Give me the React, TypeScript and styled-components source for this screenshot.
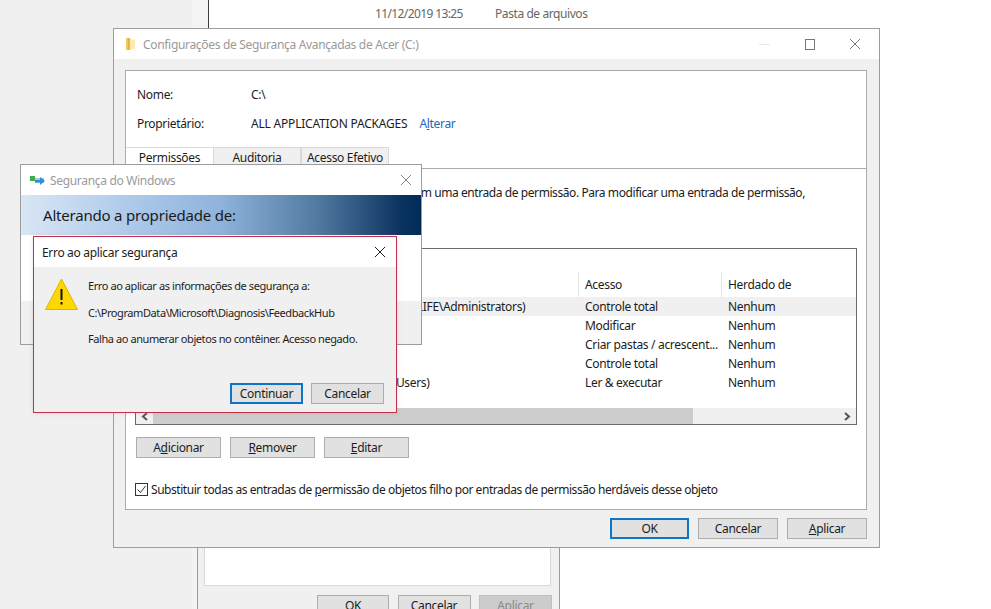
import { FC, ReactNode } from 'react';
import styled, { createGlobalStyle } from 'styled-components';

const GlobalStyle = createGlobalStyle`
  html, body {
    margin: 0;
    padding: 0;
    background: #fff;
  }
  body {
    font-family: 'Noto Sans', 'Open Sans', sans-serif;
    font-size: 12px;
    letter-spacing: -0.32px;
    color: #1c1c1c;
  }
  * {
    box-sizing: border-box;
  }
`;

type Row = { name: string; access: string; selected?: boolean };

const rows: Row[] = [
  { name: 'Administradores (ACER-NOTEBOOK-DAS-LIFE\\Administrators)', access: 'Controle total', selected: true },
  { name: '', access: 'Modificar' },
  { name: '', access: 'Criar pastas / acrescent...' },
  { name: '', access: 'Controle total' },
  { name: 'Usuários do computador (ACER-LIFE\\Users)', access: 'Ler & executar' },
];

const FolderIcon = () => (
  <svg width="11" height="14" viewBox="0 0 11 14">
    <path d="M1 1h3l1 1v11H1z" fill="#f2c95c" />
    <path d="M5 2l5 1v9l-5 1z" fill="#fbe9b4" />
    <path d="M3 1h2v12H3z" fill="#e6b53a" />
  </svg>
);

const SecurityIcon = () => (
  <svg width="15" height="11" viewBox="0 0 15 11">
    <rect x="0" y="1" width="5" height="5" fill="#3fae49" />
    <rect x="5" y="3" width="9" height="5" fill="#b9c2cc" />
    <path d="M5 5h5V2l5 4-5 4V7.500H5z" fill="#2f8fdc" />
  </svg>
);

const CloseIcon: FC<{ color: string }> = ({ color }) => (
  <svg width="12" height="12" viewBox="0 0 12 12">
    <path d="M1 1l10 10M11 1L1 11" stroke={color} strokeWidth="1" fill="none" />
  </svg>
);

const WarningIcon = () => (
  <svg width="33" height="32" viewBox="0 0 33 32">
    <path d="M16.5 1L32.5 31.500H.5z" fill="#ffd800" stroke="#e0b400" strokeWidth="1" />
    <rect x="15.500" y="11" width="2" height="11" fill="#111" />
    <rect x="15.500" y="24" width="2" height="2.500" fill="#111" />
  </svg>
);

const CheckIcon = () => (
  <svg width="13" height="13" viewBox="0 0 13 13">
    <rect x=".5" y=".5" width="12" height="12" fill="#fff" stroke="#333" />
    <path d="M2.500 6.500l3 3 5-6.500" stroke="#333" strokeWidth="1" fill="none" />
  </svg>
);

const Chevron: FC<{ flip?: boolean }> = ({ flip }) => (
  <svg width="7" height="9" viewBox="0 0 7 9" style={flip ? { transform: 'scaleX(-1)' } : undefined}>
    <path d="M6 1L2 4.500 6 8" stroke="#555" strokeWidth="2" fill="none" />
  </svg>
);

const Btn: FC<{ primary?: boolean; disabled?: boolean; width: number; children: ReactNode }> = ({ primary, disabled, width, children }) => (
  <Button $primary={primary} $disabled={disabled} $width={width}>
    {children}
  </Button>
);

export default function App() {
  return (
    <>
      <GlobalStyle />
      <Desktop>
        <Sidebar />
        <SideStrip />
        <FileList>
          <FileDate>11/12/2019 13:25</FileDate>
          <FileType>Pasta de arquivos</FileType>
        </FileList>

        <BackWindow>
          <BackPanel />
          <BackFooter>
            <Btn width={72}>OK</Btn>
            <Btn width={73}>Cancelar</Btn>
            <Btn width={73} disabled>Aplicar</Btn>
          </BackFooter>
        </BackWindow>

        <MainWindow>
          <TitleBar>
            <FolderIcon />
            <TitleText>Configurações de Segurança Avançadas de Acer (C:)</TitleText>
            <WindowControls>
              <MinimizeGlyph />
              <MaximizeGlyph />
              <CloseIcon color="#777" />
            </WindowControls>
          </TitleBar>
          <MainBody>
            <Panel>
              <InfoRow>
                <InfoLabel>Nome:</InfoLabel>
                <span>C:\</span>
              </InfoRow>
              <InfoRow $second>
                <InfoLabel>Proprietário:</InfoLabel>
                <OwnerName>ALL APPLICATION PACKAGES</OwnerName>
                <OwnerLink>A<u>l</u>terar</OwnerLink>
              </InfoRow>
              <Tabs>
                <Tab $active>Permissões</Tab>
                <Tab>Auditoria</Tab>
                <Tab>Acesso Efetivo</Tab>
              </Tabs>
              <TabContent>
                <Description>
                  Para obter informações adicionais, clique duas vezes em uma entrada de permissão. Para modificar uma entrada de permissão,
                </Description>
                <PermissionList>
                  <ListHeader>
                    <HeaderCell />
                    <HeaderCell />
                    <HeaderCell $divider>Acesso</HeaderCell>
                    <HeaderCell $divider>Herdado de</HeaderCell>
                  </ListHeader>
                  {rows.map((row) => (
                    <ListRow key={row.access + row.name} $selected={row.selected}>
                      <Cell />
                      <Cell>{row.name}</Cell>
                      <Cell $data>{row.access}</Cell>
                      <Cell $data>Nenhum</Cell>
                    </ListRow>
                  ))}
                  <ScrollBar>
                    <ScrollArrow><Chevron /></ScrollArrow>
                    <ScrollThumb />
                    <ScrollTrack />
                    <ScrollArrow><Chevron flip /></ScrollArrow>
                  </ScrollBar>
                </PermissionList>
                <ListActions>
                  <Btn width={85}>A<u>d</u>icionar</Btn>
                  <Btn width={85}><u>R</u>emover</Btn>
                  <Btn width={85}><u>E</u>ditar</Btn>
                </ListActions>
                <CheckRow>
                  <CheckIcon />
                  <span>Substituir todas as entradas de <u>p</u>ermissão de objetos filho por entradas de permissão herdáveis desse objeto</span>
                </CheckRow>
              </TabContent>
            </Panel>
            <Footer>
              <Btn width={79} primary>OK</Btn>
              <Btn width={80}>Cancelar</Btn>
              <Btn width={80}><u>A</u>plicar</Btn>
            </Footer>
          </MainBody>
        </MainWindow>

        <SecurityWindow>
          <TitleBar $small>
            <SecurityIcon />
            <TitleText>Segurança do Windows</TitleText>
            <WindowControls>
              <CloseIcon color="#8a8a8a" />
            </WindowControls>
          </TitleBar>
          <Banner>Alterando a propriedade de:</Banner>
          <SecurityContent />
          <SecurityFooter />
        </SecurityWindow>

        <ErrorDialog>
          <ErrorTitle>
            <span>Erro ao aplicar segurança</span>
            <CloseIcon color="#222" />
          </ErrorTitle>
          <ErrorBody>
            <ErrorMessage>
              <WarningIcon />
              <ErrorLines>
                <ErrorLine>Erro ao aplicar as informações de segurança a:</ErrorLine>
                <ErrorLine>C:\ProgramData\Microsoft\Diagnosis\FeedbackHub</ErrorLine>
                <ErrorLine>Falha ao anumerar objetos no contêiner. Acesso negado.</ErrorLine>
              </ErrorLines>
            </ErrorMessage>
            <ErrorActions>
              <Btn width={73} primary>Continuar</Btn>
              <Btn width={73}>Cancelar</Btn>
            </ErrorActions>
          </ErrorBody>
        </ErrorDialog>
      </Desktop>
    </>
  );
}

const Desktop = styled.div`
  position: relative;
  display: flex;
  width: 991px;
  height: 609px;
  overflow: hidden;
  background: #fff;
`;

const Sidebar = styled.div`
  width: 192px;
  background: #f0f0f0;
`;

const SideStrip = styled.div`
  width: 17px;
  background: #f3f3f3;
  border-right: 1px solid #3c3c3c;
`;

const FileList = styled.div`
  display: flex;
  align-items: flex-start;
  flex: 1;
  padding: 5px 0 0 166px;
  color: #666;
`;

const FileDate = styled.span`
  width: 120px;
  letter-spacing: -0.62px;
`;

const FileType = styled.span`
  letter-spacing: -0.42px;
`;

const BackWindow = styled.div`
  position: absolute;
  left: 197px;
  top: 300px;
  width: 363px;
  height: 320px;
  display: flex;
  flex-direction: column;
  padding: 0 7px 0 6px;
  background: #f0f0f0;
  border: 1px solid #9a9a9a;
`;

const BackPanel = styled.div`
  height: 285px;
  margin-right: 1px;
  background: #fff;
  border: 1px solid #d9d9d9;
`;

const BackFooter = styled.div`
  display: flex;
  justify-content: flex-end;
  gap: 8.5px;
  margin-top: 9px;
`;

const MainWindow = styled.div`
  position: absolute;
  left: 113px;
  top: 28px;
  width: 767px;
  height: 520px;
  display: flex;
  flex-direction: column;
  background: #f0f0f0;
  border: 1px solid #9c9c9c;
`;

const SecurityWindow = styled.div`
  position: absolute;
  left: 20px;
  top: 164px;
  width: 402px;
  height: 181px;
  display: flex;
  flex-direction: column;
  background: #fff;
  border: 1px solid #9c9c9c;
`;

const TitleBar = styled.div<{ $small?: boolean }>`
  display: flex;
  align-items: center;
  flex-shrink: 0;
  height: 30px;
  padding-left: ${(p) => (p.$small ? '9px' : '11px')};
  gap: ${(p) => (p.$small ? '5px' : '7px')};
  padding-right: ${(p) => (p.$small ? '9px' : '18px')};
  background: #fff;
`;

const TitleText = styled.span`
  color: #9a9a9a;
  font-size: 12px;
`;

const WindowControls = styled.div`
  display: flex;
  align-items: center;
  gap: 35px;
  margin-left: auto;
`;

const MinimizeGlyph = styled.div`
  width: 11px;
  height: 1px;
  background: #e8e8e8;
`;

const MaximizeGlyph = styled.div`
  width: 10px;
  height: 11px;
  margin-right: -1px;
  border: 1px solid #777;
`;

const MainBody = styled.div`
  display: flex;
  flex-direction: column;
  flex: 1;
  padding: 11px 12px 0 11px;
`;

const Panel = styled.div`
  display: flex;
  flex-direction: column;
  height: 440px;
  background: #fff;
  border: 1px solid #ababab;
`;

const InfoRow = styled.div<{ $second?: boolean }>`
  display: flex;
  align-items: center;
  height: 20px;
  margin-top: ${(p) => (p.$second ? '9px' : '13px')};
  padding-left: 11px;
`;

const InfoLabel = styled.span`
  width: 114px;
`;

const OwnerName = styled.span`
  letter-spacing: -0.2px;
`;

const OwnerLink = styled.span`
  margin-left: 12px;
  color: #1d68b8;
`;

const Tabs = styled.div`
  display: flex;
  height: 22px;
  margin-top: 14px;
  border-bottom: 1px solid #ababab;
`;

const Tab = styled.div<{ $active?: boolean }>`
  display: flex;
  align-items: center;
  justify-content: center;
  width: ${(p) => (p.$active ? '87px' : '88px')};
  height: ${(p) => (p.$active ? '22px' : '21px')};
  padding-bottom: ${(p) => (p.$active ? '2px' : '0')};
  background: ${(p) => (p.$active ? '#fff' : '#f0f0f0')};
  border: 1px solid ${(p) => (p.$active ? '#fff' : '#d9d9d9')};
  border-top-color: #d9d9d9;
`;

const TabContent = styled.div`
  display: flex;
  flex-direction: column;
  flex: 1;
  padding: 14px 9px 0;
`;

const Description = styled.div`
  height: 20px;
  line-height: 20px;
  margin-left: 2px;
  letter-spacing: -0.42px;
  white-space: nowrap;
`;

const PermissionList = styled.div`
  display: flex;
  flex-direction: column;
  flex-shrink: 0;
  height: 177px;
  margin-top: 45px;
  padding-top: 23px;
  border: 1px solid #6a6a6a;
`;

const columns = 'grid-template-columns: 57px 385px 143px 1fr;';

const ListHeader = styled.div`
  display: grid;
  ${columns}
  height: 25px;
`;

const HeaderCell = styled.div<{ $divider?: boolean }>`
  display: flex;
  align-items: center;
  padding-left: 6px;
  border-left: ${(p) => (p.$divider ? '1px solid #e5e5e5' : 'none')};
`;

const ListRow = styled.div<{ $selected?: boolean }>`
  display: grid;
  ${columns}
  height: 19px;
  background: ${(p) => (p.$selected ? '#f0f0f0' : 'transparent')};
`;

const Cell = styled.div<{ $data?: boolean }>`
  padding-left: ${(p) => (p.$data ? '7px' : '6px')};
  line-height: 19px;
  white-space: nowrap;
  overflow: hidden;
`;

const ScrollBar = styled.div`
  display: flex;
  height: 16px;
  margin-top: auto;
  background: #f0f0f0;
`;

const ScrollArrow = styled.div`
  display: flex;
  align-items: center;
  justify-content: center;
  width: 17px;
`;

const ScrollThumb = styled.div`
  width: 540px;
  background: #cdcdcd;
`;

const ScrollTrack = styled.div`
  flex: 1;
`;

const ListActions = styled.div`
  display: flex;
  gap: 9px;
  margin: 12px 0 0 1px;
`;

const Button = styled.div<{ $primary?: boolean; $disabled?: boolean; $width: number }>`
  display: flex;
  align-items: center;
  justify-content: center;
  flex-shrink: 0;
  width: ${(p) => p.$width}px;
  height: 21px;
  color: ${(p) => (p.$disabled ? '#8b8b8b' : '#1c1c1c')};
  background: ${(p) => (p.$disabled ? '#cccccc' : '#e1e1e1')};
  border: ${(p) => (p.$primary ? '2px solid #0f74c4' : `1px solid ${p.$disabled ? '#bfbfbf' : '#adadad'}`)};
`;

const CheckRow = styled.div`
  display: flex;
  align-items: center;
  gap: 3px;
  height: 20px;
  margin-top: 21px;
  letter-spacing: -0.45px;
  white-space: nowrap;
`;

const Footer = styled.div`
  display: flex;
  justify-content: flex-end;
  gap: 9px;
  margin-top: 8px;
`;

const Banner = styled.div`
  display: flex;
  align-items: center;
  flex-shrink: 0;
  height: 40px;
  padding-left: 22px;
  font-size: 15px;
  letter-spacing: -0.2px;
  color: #1a1a1a;
  background: linear-gradient(90deg, #d9e6f5 0%, #a9c7e8 30%, #8fb3db 50%, #4f789f 75%, #0a3360 95%, #002b59 100%);
`;

const SecurityContent = styled.div`
  flex: 1;
  background: #fff;
`;

const SecurityFooter = styled.div`
  height: 43px;
  background: #f0f0f0;
`;

const ErrorDialog = styled.div`
  position: absolute;
  left: 33px;
  top: 236px;
  width: 364px;
  height: 177px;
  display: flex;
  flex-direction: column;
  background: #f0f0f0;
  border: 1px solid #c0304a;
  box-shadow: 0 0 4px rgba(200, 120, 120, 0.25);
`;

const ErrorTitle = styled.div`
  display: flex;
  align-items: center;
  justify-content: space-between;
  height: 30px;
  flex-shrink: 0;
  padding: 0 10px 0 8px;
  background: #fff;
`;

const ErrorBody = styled.div`
  display: flex;
  flex-direction: column;
  flex: 1;
  padding: 11px 12px 8px 11px;
`;

const ErrorMessage = styled.div`
  display: flex;
  gap: 10px;
`;

const ErrorLines = styled.div`
  display: flex;
  flex-direction: column;
  gap: 6.5px;
  margin-top: -2px;
  font-size: 11px;
  letter-spacing: -0.42px;
`;

const ErrorLine = styled.div`
  height: 20px;
  line-height: 20px;
  white-space: nowrap;
`;

const ErrorActions = styled.div`
  display: flex;
  justify-content: flex-end;
  gap: 8px;
  margin-top: auto;
`;
